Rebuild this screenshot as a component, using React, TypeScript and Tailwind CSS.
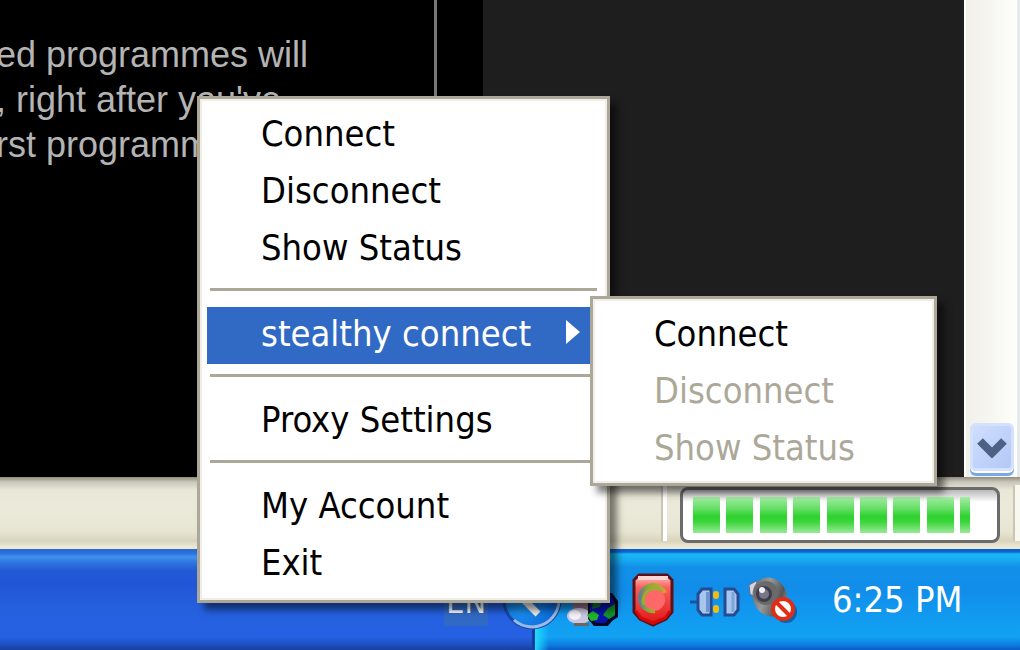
import type { ReactNode } from "react";

interface MenuItemProps {
  label: string;
  disabled?: boolean;
  active?: boolean;
  children?: ReactNode;
}

const MenuItem = ({ label, disabled, active, children }: MenuItemProps) => {
  const color = active
    ? "bg-[#316ac5] text-white"
    : "text-black disabled:text-[#aca899]";
  return (
    <li className="relative" role="none">
      <button
        type="button"
        role="menuitem"
        disabled={disabled}
        aria-haspopup={children ? "menu" : undefined}
        className={`flex h-[57px] w-full items-center justify-between pr-5 pb-1 pl-[54px] text-left ${color}`}
      >
        {label}
        {active && (
          <svg width="14" height="28" viewBox="0 0 14 28" aria-hidden="true">
            <path d="M0 0L14 12L0 24Z" fill="white" />
          </svg>
        )}
      </button>
      {children}
    </li>
  );
};

const MenuSeparator = () => (
  <li role="separator" className="flex h-[29px] items-center px-[3px] pb-[6px]">
    <div className="h-[3px] w-full bg-[#aca899]" />
  </li>
);

const menuStyle =
  "absolute border-[3px] border-[#aca899] bg-white px-[7px] pt-2 ring-[#f0eee6] ring-inset ring-2 shadow-[7px_7px_7px_rgba(0,0,0,0.5)]";

const ContextMenu = () => (
  <ul role="menu" className={`${menuStyle} top-[96px] left-[197px] w-[413px] pb-[7px]`}>
    <MenuItem label="Connect" />
    <MenuItem label="Disconnect" />
    <MenuItem label="Show Status" />
    <MenuSeparator />
    <MenuItem label="stealthy connect" active>
      <ul role="menu" className={`${menuStyle} -top-[11px] left-full -ml-[10px] w-[347px] pb-[5px]`}>
        <MenuItem label="Connect" />
        <MenuItem label="Disconnect" disabled />
        <MenuItem label="Show Status" disabled />
      </ul>
    </MenuItem>
    <MenuSeparator />
    <MenuItem label="Proxy Settings" />
    <MenuSeparator />
    <MenuItem label="My Account" />
    <MenuItem label="Exit" />
  </ul>
);

const ScrollBar = () => (
  <div className="flex w-[53px] flex-col justify-end border-l-2 border-white bg-gradient-to-r from-[#f0efe8] to-[#fefefb] pr-[3px] pb-[6px] pl-1">
    <button
      type="button"
      aria-label="Scroll down"
      className="flex h-[48px] items-center justify-center rounded-md border-[3px] border-[#d3e1fd] bg-gradient-to-br from-[#d0defd] to-[#b3c8f8] shadow-[0_2px_0_#ffffff,0_5px_0_#7ba7e6]"
    >
      <svg width="30" height="22" viewBox="0 0 30 22" aria-hidden="true">
        <path d="M3 5L15 17L27 5" fill="none" stroke="#4d6185" strokeWidth="8" />
      </svg>
    </button>
  </div>
);

const SEGMENTS = [27, 27, 27, 27, 27, 27, 27, 27, 10];

const StatusBar = () => (
  <div className="flex h-[72px] items-center justify-end bg-[linear-gradient(#8f8d7e_0px,#c9c7b9_5px,#e9e7d8_13px,#ebe9d9_30px,#e8e6d3_54px,#d9d5bc_64px,#ece9d8_70px)]">
    <div className="mr-[13px] h-[56px] w-[6px] border-r-4 border-l-2 border-r-white border-l-[#c9c6b2]" />
    <div
      role="progressbar"
      aria-label="Page load"
      aria-valuenow={92}
      className="mt-1 flex h-[56px] w-[320px] items-center rounded-lg border-[3px] border-[#6b6b6b] bg-[linear-gradient(#b8b8b8_0px,#ffffff_12px)] px-[10px]"
    >
      <div className="flex w-[277px] justify-between">
        {SEGMENTS.map((width, index) => (
          <div
            key={index}
            className="h-[36px] bg-[linear-gradient(#a3eda3,#5fdd5f_35%,#2bd22b_55%,#3fd63f_70%,#98ea98)]"
            style={{ width }}
          />
        ))}
      </div>
    </div>
    <div className="ml-[13px] h-[56px] w-[7px] border-l-2 border-[#c9c6b2] bg-[#f8f7f0]" />
  </div>
);

const ExpandIcon = () => (
  <svg width="60" height="60" viewBox="0 0 60 60" aria-hidden="true">
    <defs>
      <radialGradient id="expand" cx="0.3" cy="0.6" r="0.7">
        <stop offset="0" stopColor="#1c96f5" />
        <stop offset="1" stopColor="#0b62d4" />
      </radialGradient>
    </defs>
    <circle cx="30" cy="30" r="28" fill="url(#expand)" stroke="#1749a8" strokeWidth="3" />
    <path d="M12 50A27 27 0 0 0 57 29" fill="none" stroke="#9bb9e4" strokeWidth="3" />
    <path d="M35 17L22 30L36 44" fill="none" stroke="#f3efe8" strokeWidth="7" />
  </svg>
);

const PeopleIcon = () => (
  <svg width="56" height="54" viewBox="0 0 56 54" aria-hidden="true">
    <path d="M7 26H24V38H7Z" fill="#8a7186" />
    <ellipse cx="13" cy="43" rx="12" ry="8" fill="#c9c7e2" />
    <ellipse cx="9" cy="42" rx="6" ry="5" fill="#f4f2fa" />
    <path d="M8 50H23V53H8Z" fill="#6e6560" />
    <path d="M26 20H46L52 28V44L46 48L42 53H28L22 46V28Z" fill="#06091f" />
    <path d="M27 22H45L49 30V43L43 46L39 50H30L24 44V30Z" fill="#0a12ae" />
    <path d="M21 42L27 38L33 42L31 47L25 48Z" fill="#20b52a" />
    <path d="M37 42L42 35L49 31V42L43 46Z" fill="#149329" />
    <path d="M27 29L36 27L34 34L26 36Z" fill="#0d7230" />
  </svg>
);

const ShieldIcon = () => (
  <svg width="42" height="54" viewBox="0 0 42 54" aria-hidden="true">
    <defs>
      <linearGradient id="shield" x1="0" y1="0" x2="0" y2="1">
        <stop offset="0" stopColor="#ffc4c0" />
        <stop offset="0.25" stopColor="#f8605c" />
        <stop offset="1" stopColor="#e01414" />
      </linearGradient>
      <linearGradient id="swirl" x1="0" y1="0" x2="1" y2="0">
        <stop offset="0" stopColor="#5f7f90" />
        <stop offset="0.35" stopColor="#8cae2e" />
        <stop offset="1" stopColor="#dc9a3c" />
      </linearGradient>
    </defs>
    <path
      d="M7 2H35L40 7V39L34 46L21 52L8 46L2 39V7Z"
      fill="url(#shield)"
      stroke="#5e1017"
      strokeWidth="3"
    />
    <path d="M6 5H36" stroke="#ffd6d3" strokeWidth="4" />
    <path d="M4 38L9 45L21 50L33 45L38 38" fill="none" stroke="#d40808" strokeWidth="3" />
    <circle cx="22" cy="27" r="11" fill="#ff6868" />
    <path d="M33 20A13 13 0 1 0 23 38" fill="none" stroke="url(#swirl)" strokeWidth="4" />
    <path d="M29 17A12 12 0 0 0 12 32" fill="none" stroke="#8fb52c" strokeWidth="3" />
  </svg>
);

const PlugIcon = () => (
  <svg width="50" height="30" viewBox="0 0 50 30" aria-hidden="true">
    <path d="M0 15H8" stroke="#17569e" strokeWidth="3" />
    <path d="M12 2H21V28H12L8 23V7Z" fill="#a6c6ee" stroke="#244d91" strokeWidth="3" />
    <path d="M18 5V25" stroke="#6e95d1" strokeWidth="4" />
    <rect x="23" y="4" width="6" height="8" rx="3" fill="#f3bd10" />
    <rect x="23" y="18" width="6" height="8" rx="3" fill="#f3bd10" />
    <path d="M35 2H44L48 7V23L44 28H35Z" fill="#a6c6ee" stroke="#244d91" strokeWidth="3" />
    <path d="M43 5V25" stroke="#7ea4dc" strokeWidth="3" />
  </svg>
);

const SpeakerIcon = () => (
  <svg width="50" height="48" viewBox="0 0 50 48" aria-hidden="true">
    <defs>
      <linearGradient id="cone" x1="0" y1="0" x2="1" y2="1">
        <stop offset="0" stopColor="#555" />
        <stop offset="0.4" stopColor="#999" />
        <stop offset="0.7" stopColor="#555" />
        <stop offset="1" stopColor="#bbb" />
      </linearGradient>
    </defs>
    <ellipse cx="38" cy="36" rx="11" ry="11" fill="#0d3c78" opacity="0.6" />
    <path d="M1 9L8 5L14 16L9 23L2 18Z" fill="#d6d2e2" stroke="#6a6680" />
    <ellipse cx="22" cy="21" rx="17" ry="20" fill="url(#cone)" transform="rotate(-22 22 21)" />
    <ellipse cx="18" cy="17" rx="12" ry="12" fill="#6a6a6a" />
    <circle cx="16" cy="18" r="8" fill="#3d3d4e" />
    <circle cx="16" cy="18" r="5" fill="#777786" />
    <circle cx="14" cy="14" r="3" fill="#f0f0f5" />
    <circle cx="35" cy="33" r="10" fill="white" stroke="#e02d17" strokeWidth="4" />
    <path d="M29 27L41 39" stroke="#e02d17" strokeWidth="4" />
  </svg>
);

const TaskBar = () => (
  <div className="flex h-[101px] bg-[linear-gradient(#2a68cf_0px,#2c6fe0_4px,#4391ee_8px,#2f78e4_13px,#2259d5_22px,#2157d7_36px,#2560df_60px,#2561e2_88px,#1d4fbf_96px,#173f9e_101px)]">
    <div className="flex flex-1 items-center justify-end pr-[44px]">
      <span className="flex h-[52px] items-center bg-[#316ac5] px-0.5 pt-1 text-[32px] text-white">
        EN
      </span>
    </div>
    <div className="flex w-[488px] items-center border-l-[3px] border-[#12419c] bg-[linear-gradient(90deg,#1fdcff,transparent_14px),linear-gradient(#0a5bc9_0px,#0c67d2_3px,#19b9f4_5px,#18aef2_10px,#1290e8_18px,#118dea_40px,#119bf0_70px,#12a2f2_88px,#0c78dc_97px,#0a58c4_101px)]">
      <button type="button" aria-label="Show hidden icons" className="-ml-[33px]">
        <ExpandIcon />
      </button>
      <div className="flex flex-1 items-center">
        <div className="ml-1">
          <PeopleIcon />
        </div>
        <div className="ml-[10px]">
          <ShieldIcon />
        </div>
        <div className="mt-1 ml-4">
          <PlugIcon />
        </div>
        <div className="ml-2">
          <SpeakerIcon />
        </div>
        <time className="ml-[34px] text-white">6:25 PM</time>
      </div>
    </div>
  </div>
);

export default function App() {
  return (
    <div className="relative flex h-screen flex-col overflow-hidden font-['DejaVu_Sans_Condensed','DejaVu_Sans',sans-serif] text-[36px] leading-none whitespace-nowrap">
      <div className="flex min-h-0 flex-1 bg-[#1e1e1e]">
        <div className="flex w-[483px] bg-black">
          <div className="flex w-[437px] justify-start overflow-hidden border-r-[3px] border-[#777]">
            <p className="-ml-1 pt-8 font-['Liberation_Sans',Arial,sans-serif] leading-[45px] text-[#b4b4b4]">
              ed programmes will
              <br />
              , right after you've
              <br />
              rst programm
            </p>
          </div>
        </div>
        <div className="flex-1" />
        <ScrollBar />
        <div className="w-[3px] bg-[#e4e9ee]" />
      </div>
      <StatusBar />
      <TaskBar />
      <ContextMenu />
    </div>
  );
}
